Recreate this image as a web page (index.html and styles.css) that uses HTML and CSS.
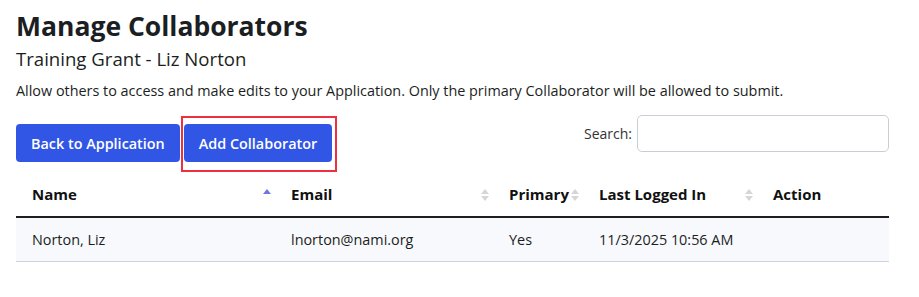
FILE: index.html
```html
<!DOCTYPE html>
<html lang="en">
<head>
<meta charset="utf-8">
<title>Manage Collaborators</title>
<link rel="stylesheet" href="styles.css">
</head>
<body>
<div class="page">
  <h1 class="title">Manage Collaborators</h1>
  <h2 class="subtitle">Training Grant - Liz Norton</h2>
  <p class="intro">Allow others to access and make edits to your Application. Only the primary Collaborator will be allowed to submit.</p>

  <div class="toolbar">
    <div class="actions">
      <button class="btn">Back to Application</button>
      <span class="highlight"><button class="btn">Add Collaborator</button></span>
    </div>
    <label class="search">Search: <input type="search" class="search-input"></label>
  </div>

  <table class="grid">
    <colgroup>
      <col class="c-name"><col class="c-email"><col class="c-primary"><col class="c-last"><col class="c-action">
    </colgroup>
    <thead>
      <tr>
        <th class="sortable asc">Name</th>
        <th class="sortable">Email</th>
        <th class="sortable">Primary</th>
        <th class="sortable">Last Logged In</th>
        <th>Action</th>
      </tr>
    </thead>
    <tbody>
      <tr>
        <td>Norton, Liz</td>
        <td>lnorton@nami.org</td>
        <td>Yes</td>
        <td>11/3/2025 10:56 AM</td>
        <td></td>
      </tr>
    </tbody>
  </table>
</div>
</body>
</html>
```

FILE: styles.css
```css
* { box-sizing: border-box; }
html, body { margin: 0; padding: 0; background: #fff; }
body {
  font-family: "Open Sans", "Liberation Sans", sans-serif;
  color: #1b1e22;
}
.page { padding: 10px 30px 0 16px; }
.title {
  margin: 0;
  font-size: 26.5px;
  line-height: 32px;
  font-weight: 700;
  color: #1b1e22;
}
.subtitle {
  margin: 6px 0 0;
  font-size: 18.6px;
  line-height: 22px;
  font-weight: 400;
  color: #1b1e22;
}
.intro {
  margin: 10px 0 0;
  font-size: 14.4px;
  line-height: 21px;
  color: #1b1e22;
}
.toolbar {
  display: flex;
  justify-content: space-between;
  align-items: flex-start;
  margin-top: 14px;
}
.actions {
  display: flex;
  gap: 4px;
  margin-top: 9px;
}
.btn {
  font-family: inherit;
  font-size: 14.4px;
  font-weight: 600;
  color: #fff;
  background: #3155e4;
  border: none;
  border-radius: 4px;
  height: 38px;
  padding: 0 15px;
  cursor: pointer;
}
.highlight { position: relative; display: inline-flex; }
.highlight::after {
  content: "";
  position: absolute;
  left: -3px; right: -5px; top: -8px; bottom: -10px;
  border: 2px solid #ee2f3f;
  pointer-events: none;
}
.search {
  display: flex;
  align-items: center;
  gap: 5px;
  font-size: 14px;
  color: #333;
}
.search-input {
  width: 252px;
  height: 37px;
  border: 1px solid #c9ced6;
  border-radius: 5px;
  background: #fff;
}
.grid {
  width: 873px;
  margin-top: 12px;
  border-collapse: collapse;
  table-layout: fixed;
  font-size: 14.4px;
}
.c-name { width: 259px; }
.c-email { width: 218px; }
.c-primary { width: 90px; }
.c-last { width: 174px; }
.c-action { width: 132px; }
.grid th {
  text-align: left;
  font-size: 15px;
  font-weight: 700;
  color: #111;
  padding: 10px 16px 11px;
  line-height: 21px;
  border-bottom: 2px solid #1e1e1e;
  position: relative;
}
.grid td {
  padding: 11px 16px 11px;
  line-height: 21px;
  background: #f8f9fd;
  border-bottom: 1px solid #cfd3da;
  color: #1b1e22;
}
.sortable::before, .sortable::after {
  content: "";
  position: absolute;
  right: 4px;
  width: 0; height: 0;
  border-left: 4px solid transparent;
  border-right: 4px solid transparent;
}
.sortable::before {
  top: 15px;
  border-bottom: 5px solid #d6d6d6;
}
.sortable::after {
  top: 22px;
  border-top: 5px solid #d6d6d6;
}
.sortable.asc::before { border-bottom-color: #6f78e0; }
.sortable.asc::after { border-top-color: transparent; }
```
